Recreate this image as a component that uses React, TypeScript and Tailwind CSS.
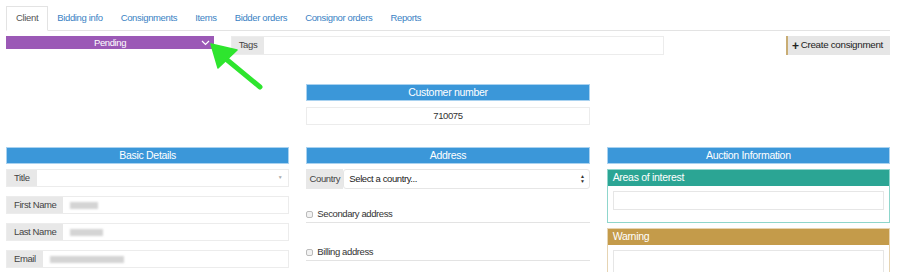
import React from "react";

const tabs = ["Client", "Bidding info", "Consignments", "Items", "Bidder orders", "Consignor orders", "Reports"];

function Header({ children }: { children: React.ReactNode }) {
  return (
    <div className="h-[17px] bg-[#3b97d9] text-white text-[10.5px] tracking-[-0.3px] flex items-center justify-center border border-[#a9d2f0]">
      {children}
    </div>
  );
}

function Blur({ w }: { w: number }) {
  return <span className="inline-block h-[7px] bg-[#d4d4d4] blur-[1px]" style={{ width: w }} />;
}

function InputRow({ label, labelW, children, arrow }: { label: string; labelW: number; children?: React.ReactNode; arrow?: boolean }) {
  return (
    <div className="flex h-[18px] border border-[#ececec]">
      <div className="bg-[#e8e8e8] text-[#444] flex items-center pl-[7px] whitespace-nowrap" style={{ width: labelW }}>
        {label}
      </div>
      <div className="flex-1 flex items-center pl-[7px] pr-[6px] bg-white">
        {children}
        {arrow && <span className="ml-auto text-[#aaa] text-[5px]">▼</span>}
      </div>
    </div>
  );
}

export default function App() {
  return (
    <div
      className="relative w-[900px] h-[272px] bg-white overflow-hidden text-[#333] text-[9.5px] tracking-[-0.4px]"
      style={{ fontFamily: '"Liberation Sans", Arial, sans-serif' }}
    >
      {/* Tabs */}
      <div className="flex ml-[6px] mr-[10px] mt-[6px] border-b border-[#e3e3e3] h-[25px] text-[9.5px] tracking-[-0.35px]">
        {tabs.map((t, i) => (
          <div
            key={t}
            className={
              i === 0
                ? "px-[9px] h-[25px] flex items-center bg-white border border-[#e3e3e3] border-b-white text-[#555] -mb-px"
                : "px-[9px] h-[25px] flex items-center text-[#3a82c4]"
            }
          >
            {t}
          </div>
        ))}
      </div>

      {/* Status / tags / button row */}
      <div className="flex items-start ml-[6px] mr-[10px] mt-[5px]">
        <div className="w-[208px] h-[13px] bg-[#9b59b6] text-white flex items-center justify-center relative">
          <span className="leading-none">Pending</span>
          <svg className="absolute right-[4px] top-[4px]" width="9" height="6" viewBox="0 0 9 6">
            <path d="M1 1 L4.5 4.5 L8 1" stroke="white" strokeWidth="1.2" fill="none" />
          </svg>
        </div>
        <div className="ml-[17px] w-[433px] h-[19px] flex border border-[#ececec]">
          <div className="w-[32px] bg-[#e8e8e8] text-[#444] flex items-center justify-center">Tags</div>
          <div className="flex-1 bg-white" />
        </div>
        <div className="ml-auto h-[19px] bg-[#e6e6e6] border-l-2 border-[#c9ad74] pl-[4px] pr-[7px] flex items-center whitespace-nowrap text-[#222] text-[9.8px] tracking-[-0.3px]">
          <span className="font-bold text-[12px] leading-none mr-[2px]">+</span>
          Create consignment
        </div>
      </div>

      {/* Customer number */}
      <div className="grid grid-cols-3 gap-[17px] ml-[6px] mr-[10px] mt-[29px]">
        <div />
        <div>
          <Header>Customer number</Header>
          <div className="mt-[6px] h-[18px] border border-[#ececec] flex items-center justify-center text-[#333]">710075</div>
        </div>
        <div />
      </div>

      {/* Sections */}
      <div className="grid grid-cols-3 gap-[17px] ml-[6px] mr-[10px] mt-[22px]">
        <div className="flex flex-col">
          <Header>Basic Details</Header>
          <div className="mt-[5px] flex flex-col gap-[9px]">
            <InputRow label="Title" labelW={30} arrow />
            <InputRow label="First Name" labelW={56}>
              <Blur w={28} />
            </InputRow>
            <InputRow label="Last Name" labelW={56}>
              <Blur w={33} />
            </InputRow>
            <InputRow label="Email" labelW={36}>
              <Blur w={74} />
            </InputRow>
          </div>
        </div>

        <div className="flex flex-col">
          <Header>Address</Header>
          <div className="mt-[5px] flex h-[20px]">
            <div className="w-[37px] bg-[#e8e8e8] text-[#444] flex items-center justify-center">Country</div>
            <div className="flex-1 border border-[#e6e6e6] rounded-[3px] flex items-center pl-[5px] pr-[4px] text-[#222]">
              Select a country...
              <span className="ml-auto flex flex-col text-[5px] leading-[5px] text-[#333]">
                <span>▲</span>
                <span>▼</span>
              </span>
            </div>
          </div>
          <div className="mt-[19px] flex items-center gap-[4px] h-[12px] text-[#333]">
            <span className="w-[7px] h-[7px] border border-[#bbb] rounded-[2px] bg-[#f2f2f2]" />
            Secondary address
          </div>
          <div className="mt-[2px] border-b border-[#e3e3e3]" />
          <div className="mt-[23px] flex items-center gap-[4px] h-[12px] text-[#333]">
            <span className="w-[7px] h-[7px] border border-[#bbb] rounded-[2px] bg-[#f2f2f2]" />
            Billing address
          </div>
          <div className="mt-[2px] border-b border-[#e3e3e3]" />
        </div>

        <div className="flex flex-col">
          <Header>Auction Information</Header>
          <div className="mt-[5px] border border-[#8fd6cc]">
            <div className="h-[16px] bg-[#2ba594] text-white text-[10.5px] tracking-[-0.3px] flex items-center pl-[5px]">Areas of interest</div>
            <div className="p-[5px] pb-[12px]">
              <div className="h-[19px] border border-[#e6e6e6]" />
            </div>
          </div>
          <div className="mt-[5px] border border-[#e6d4b3] h-[60px]">
            <div className="h-[16px] bg-[#c49b4a] text-white text-[10.5px] tracking-[-0.3px] flex items-center pl-[5px]">Warning</div>
            <div className="p-[5px]">
              <div className="h-[30px] border border-[#e6e6e6]" />
            </div>
          </div>
        </div>
      </div>

      {/* green annotation arrow */}
      <svg className="absolute left-[200px] top-[35px]" width="70" height="60" viewBox="0 0 70 60">
        <path d="M60 52 L26 24" stroke="#2ee52e" strokeWidth="5" strokeLinecap="round" fill="none" />
        <path d="M11 9 L37 15 L18 33 Z" fill="#2ee52e" stroke="#2ee52e" strokeWidth="1.5" strokeLinejoin="round" />
      </svg>
    </div>
  );
}
